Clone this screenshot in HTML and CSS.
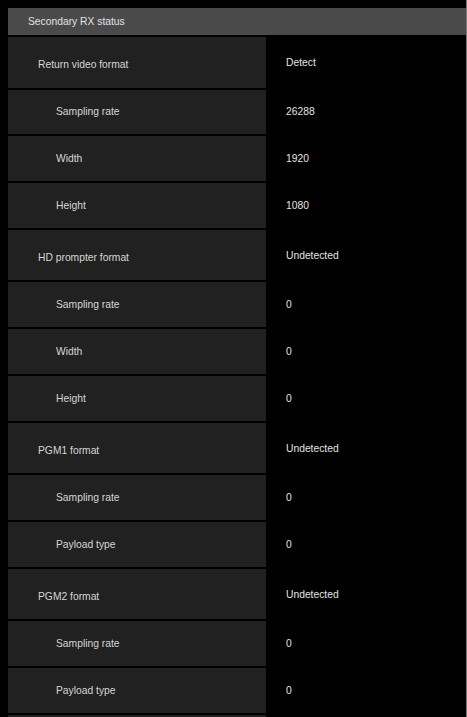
FILE: index.html
```html
<!DOCTYPE html>
<html lang="en">
<head>
    <meta charset="UTF-8">
    <meta name="viewport" content="width=device-width, initial-scale=1.0">
    <title>Secondary RX status</title>
    <link rel="stylesheet" href="styles.css">
</head>
<body>
    <div class="panel">
        <div class="panel-title">Secondary RX status</div>

        <div class="status-list">
            <div class="row row-format">
                <div class="label">Return video format</div>
                <div class="value">Detect</div>
            </div>
            <div class="row">
                <div class="label sub">Sampling rate</div>
                <div class="value">26288</div>
            </div>
            <div class="row">
                <div class="label sub">Width</div>
                <div class="value">1920</div>
            </div>
            <div class="row">
                <div class="label sub">Height</div>
                <div class="value">1080</div>
            </div>

            <div class="row row-format">
                <div class="label">HD prompter format</div>
                <div class="value">Undetected</div>
            </div>
            <div class="row">
                <div class="label sub">Sampling rate</div>
                <div class="value">0</div>
            </div>
            <div class="row">
                <div class="label sub">Width</div>
                <div class="value">0</div>
            </div>
            <div class="row">
                <div class="label sub">Height</div>
                <div class="value">0</div>
            </div>

            <div class="row row-format">
                <div class="label">PGM1 format</div>
                <div class="value">Undetected</div>
            </div>
            <div class="row">
                <div class="label sub">Sampling rate</div>
                <div class="value">0</div>
            </div>
            <div class="row">
                <div class="label sub">Payload type</div>
                <div class="value">0</div>
            </div>

            <div class="row row-format">
                <div class="label">PGM2 format</div>
                <div class="value">Undetected</div>
            </div>
            <div class="row">
                <div class="label sub">Sampling rate</div>
                <div class="value">0</div>
            </div>
            <div class="row">
                <div class="label sub">Payload type</div>
                <div class="value">0</div>
            </div>
            <div class="row">
                <div class="label sub"></div>
                <div class="value"></div>
            </div>
        </div>
    </div>
</body>
</html>
```

FILE: styles.css
```css
html, body {
    height: 100%;
}

body {
    margin: 0;
    background-color: #000;
    font-family: "Liberation Sans", Arial, sans-serif;
    font-size: 10.3px;
    color: #dcdcdc;
    overflow: hidden;
}

.panel {
    box-sizing: border-box;
    height: 100%;
    padding: 8px 0 0 8px;
    border-right: 1px solid #7a7a7a;
    overflow: hidden;
}

.panel-title {
    height: 27px;
    display: flex;
    align-items: center;
    padding-left: 20px;
    background-color: #4a4a4a;
    color: #e2e2e2;
}

.status-list {
    display: flex;
    flex-direction: column;
    gap: 2px;
    margin-top: 2px;
}

.row {
    display: grid;
    grid-template-columns: 258px 1fr;
    height: 44.8px;
    flex-shrink: 0;
}

.row-format {
    height: 50.5px;
}

.label {
    display: flex;
    align-items: center;
    padding-left: 30px;
    background-color: #212121;
    color: #d6d6d6;
}

.row-format .label {
    padding-top: 4px;
    box-sizing: border-box;
}

.label.sub {
    padding-left: 48px;
}

.value {
    display: flex;
    align-items: center;
    padding-left: 20px;
    color: #e4e4e4;
}
```
